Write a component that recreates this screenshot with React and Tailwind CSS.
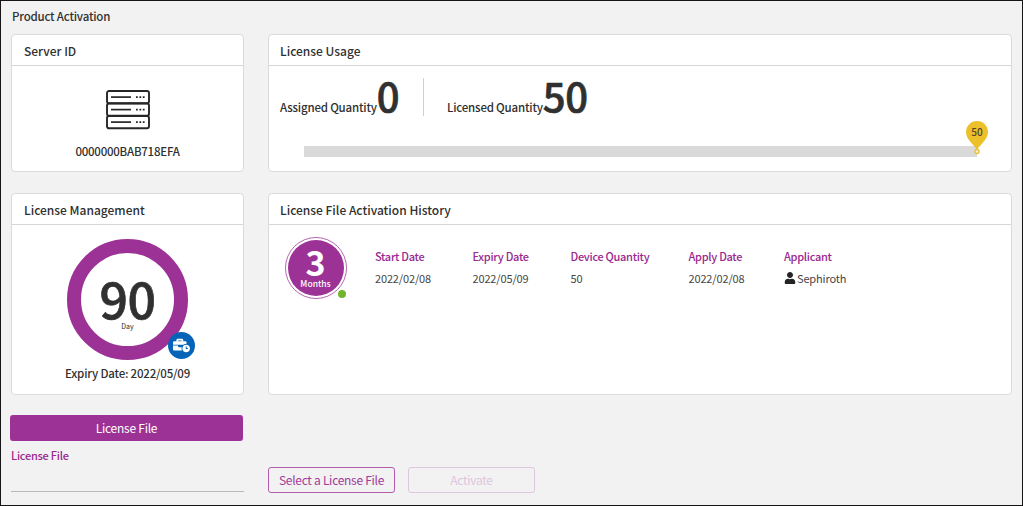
import React from "react";
import { FaBusinessTime, FaUser } from "react-icons/fa";

function Card({ title, className, titleClass = "pl-3", children }) {
  return (
    <section className={`flex flex-col rounded border border-[#dadbdc] bg-white ${className}`}>
      <h2 className={`h-[31px] shrink-0 border-b border-[#d6d7d8] text-[12px] leading-[31px] font-medium ${titleClass}`}>
        {title}
      </h2>
      {children}
    </section>
  );
}

function ServerIcon() {
  return (
    <svg width="44" height="40" viewBox="0 0 44 40" fill="none" stroke="#262626" className="mx-auto block">
      {[1, 13.5, 26].map((y) => (
        <g key={y}>
          <rect x="1" y={y} width="42" height="12.3" rx="2" strokeWidth="1.9" />
          <path d={`M5 ${y + 6.1}h20`} strokeWidth="1.7" />
          <path d={`M30 ${y + 6.1}h1.8m1.6 0h1.8m1.6 0h1.8`} strokeWidth="1.7" />
        </g>
      ))}
    </svg>
  );
}

const history = [
  { label: "Start Date", value: "2022/02/08", width: "w-[97.5px]" },
  { label: "Expiry Date", value: "2022/05/09", width: "w-[98px]" },
  { label: "Device Quantity", value: "50", width: "w-[118px]" },
  { label: "Apply Date", value: "2022/02/08", width: "w-[95.5px]" },
  { label: "Applicant", value: "Sephiroth", width: "w-[100px]", user: true },
];

export default function App() {
  return (
    <main className="flex h-[506px] w-[1023px] flex-col overflow-hidden border border-[#151515] bg-[#f2f2f2] pl-[10px] font-['Noto_Sans_CJK_SC','Noto_Sans',sans-serif] text-[#303030]">
      <h1 className="h-[33px] pl-px text-[11.5px] leading-[30px] font-medium tracking-[-0.2px]">Product Activation</h1>

      <div className="flex gap-6">
        <Card title="Server ID" className="h-[138px] w-[233px]">
          <div className="pt-[24px] text-center">
            <ServerIcon />
            <p className="mt-[11px] text-[11.5px] leading-5 font-medium tracking-[-0.25px]">0000000BAB718EFA</p>
          </div>
        </Card>
        <Card title="License Usage" titleClass="pl-[11px]" className="h-[138px] w-[744px]">
          <div className="flex h-[50px] pt-3 pl-[11px]">
            <div className="flex w-[144px] items-baseline border-r border-[#cfcfcf] leading-[35px]">
              <span className="text-[11.5px] font-medium tracking-[-0.2px]">Assigned Quantity</span>
              <span className="text-[40px] font-medium [-webkit-text-stroke:0.7px_#303030]">0</span>
            </div>
            <div className="flex items-baseline pl-[23px] leading-[35px]">
              <span className="text-[11.5px] font-medium tracking-[-0.2px]">Licensed Quantity</span>
              <span className="text-[40px] font-medium tracking-[-0.4px] [-webkit-text-stroke:0.7px_#303030]">50</span>
            </div>
          </div>
          <div className="relative mt-[30px] ml-[35px] h-[11px] w-[673px] bg-[#d9d9d9]">
            <div className="absolute -top-[25px] -right-[11px] h-[34px] w-[22px]">
              <svg width="22" height="34" viewBox="0 0 22 34" className="block">
                <path d="M11 29.5C9.7 24.5 0 19.5 0 11a11 11 0 0 1 22 0c0 8.5-9.7 13.5-11 18.5Z" fill="#ecc02b" />
                <circle cx="11" cy="30.5" r="2" fill="#f5f2e6" stroke="#ecc02b" strokeWidth="1.4" />
              </svg>
              <span className="absolute top-0 left-0 w-[22px] text-center text-[10px] leading-[22px] font-medium text-[#4b4425]">50</span>
            </div>
          </div>
        </Card>
      </div>

      <div className="mt-[21px] flex gap-6">
        <Card title="License Management" className="h-[202px] w-[233px]">
          <div className="pt-[14px] text-center">
            <div className="relative mx-auto flex h-[121px] w-[121px] flex-col items-center rounded-full border-[14px] border-[#9c3295] pt-[23px]">
              <span className="h-[46px] text-[50px] leading-[43px] font-medium tracking-[-0.5px] [-webkit-text-stroke:0.7px_#303030]">90</span>
              <span className="text-[7px] leading-[8px]">Day</span>
              <span className="absolute -right-[21px] -bottom-[13px] flex h-[27px] w-[27px] items-center justify-center rounded-full bg-[#0664b8] text-white">
                <FaBusinessTime size={17} />
              </span>
            </div>
            <p className="mt-[3px] text-[11.5px] leading-5 font-medium tracking-[-0.2px]">Expiry Date: 2022/05/09</p>
          </div>
        </Card>
        <Card title="License File Activation History" titleClass="pl-[11px]" className="h-[202px] w-[744px]">
          <div className="flex pt-3 pl-4">
            <div className="relative mr-[28px] h-[62px] w-[62px] rounded-full border border-[#b667b1] p-[2px]">
              <div className="flex h-full flex-col items-center rounded-full bg-[#9c3295] pt-[8px] pr-px text-white">
                <span className="h-[31px] text-[34px] leading-[28px] font-bold">3</span>
                <span className="text-[8.5px] leading-[9px] font-medium">Months</span>
              </div>
              <span className="absolute right-0 bottom-0 h-2 w-2 rounded-full bg-[#70b52c]" />
            </div>
            <dl className="flex pt-[8px] text-[11px]">
              {history.map((item) => (
                <div key={item.label} className={item.width}>
                  <dt className="leading-[22px] font-medium tracking-[-0.3px] text-[#99288f]">{item.label}</dt>
                  <dd className="flex items-center leading-[22px] tracking-[-0.15px] text-[#454545]">
                    {item.user && <FaUser size={12} className="mr-[1px] text-[#242424]" />}
                    {item.value}
                  </dd>
                </div>
              ))}
            </dl>
          </div>
        </Card>
      </div>

      <div className="mt-5 flex gap-6">
        <div className="-ml-px w-[234px]">
          <button className="block h-[26px] w-[233px] rounded-[3px] bg-[#9c3295] text-[12px] leading-[24px] tracking-[-0.25px] text-white">License File</button>
          <label className="ml-px block h-[51px] border-b border-[#b9b9b9] pt-[3px] text-[11px] leading-[22px] font-medium tracking-[-0.25px] text-[#99288f]">
            License File
          </label>
        </div>
        <div className="flex gap-[13px] pt-[52px]">
          <button className="h-[26px] w-[127px] rounded-[3px] border border-[#b35cae] text-[12px] leading-[24px] tracking-[-0.28px] text-[#a13a9a]">Select a License File</button>
          <button disabled className="h-[26px] w-[127px] rounded-[3px] border border-[#dfc5df] text-[12px] leading-[24px] tracking-[-0.28px] text-[#dfc5df]">Activate</button>
        </div>
      </div>
    </main>
  );
}
